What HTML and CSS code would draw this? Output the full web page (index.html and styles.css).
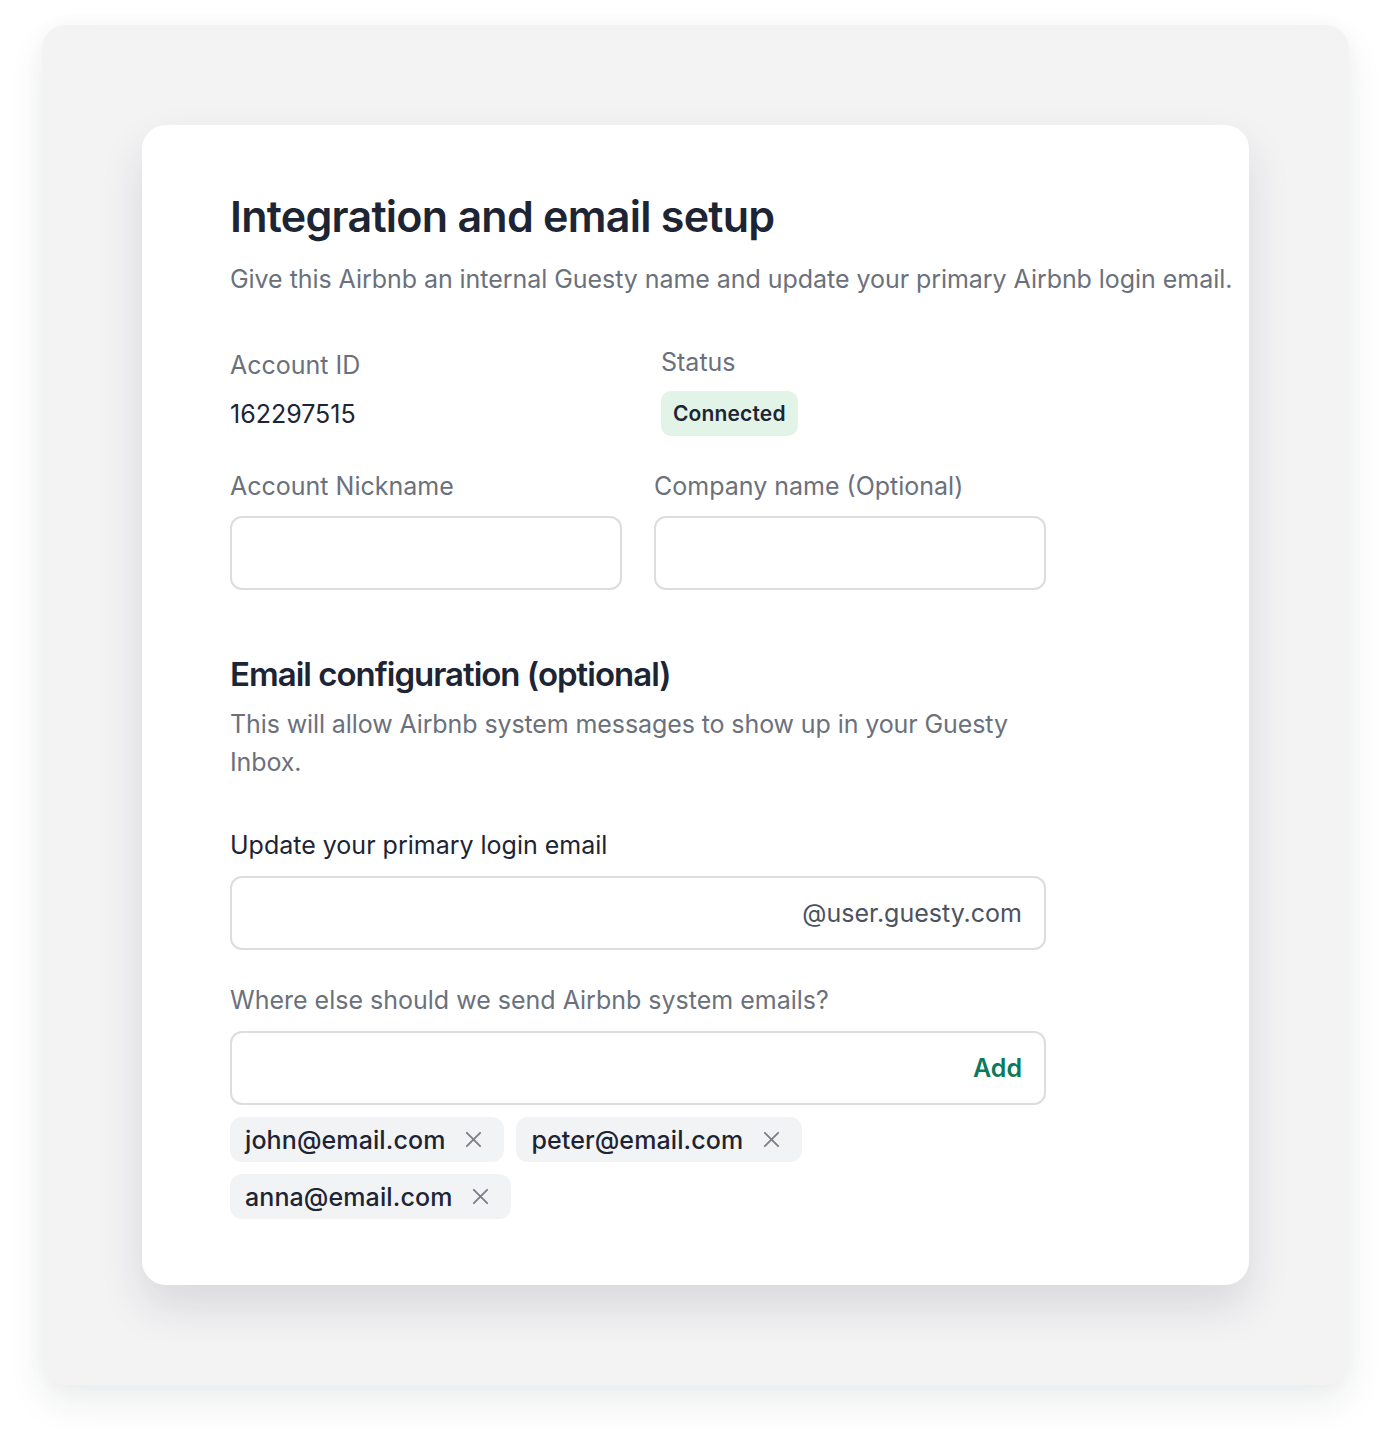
FILE: index.html
```html
<!DOCTYPE html>
<html lang="en">
<head>
<meta charset="utf-8">
<title>Integration and email setup</title>
<link rel="stylesheet" href="styles.css">
</head>
<body>
<div class="panel">
  <div class="card">
    <h1 class="title">Integration and email setup</h1>
    <p class="subtitle">Give this Airbnb an internal Guesty name and update your primary Airbnb login email.</p>

    <div class="info-row">
      <div class="info-col">
        <div class="label">Account ID</div>
        <div class="value">162297515</div>
      </div>
      <div class="info-col status-col">
        <div class="label">Status</div>
        <span class="badge">Connected</span>
      </div>
    </div>

    <div class="field-row">
      <div class="field">
        <label class="label">Account Nickname</label>
        <div class="input"></div>
      </div>
      <div class="field">
        <label class="label">Company name (Optional)</label>
        <div class="input"></div>
      </div>
    </div>

    <h2 class="section-title">Email configuration (optional)</h2>
    <p class="section-desc">This will allow Airbnb system messages to show up in your Guesty Inbox.</p>

    <div class="field wide first">
      <label class="label dark">Update your primary login email</label>
      <div class="input with-suffix"><span class="suffix">@user.guesty.com</span></div>
    </div>

    <div class="field wide second">
      <label class="label">Where else should we send Airbnb system emails?</label>
      <div class="input with-suffix"><span class="add">Add</span></div>
    </div>

    <div class="chips">
      <span class="chip">john@email.com<svg class="x" viewBox="0 0 20 20"><path d="M3 3L17 17M17 3L3 17"/></svg></span>
      <span class="chip">peter@email.com<svg class="x" viewBox="0 0 20 20"><path d="M3 3L17 17M17 3L3 17"/></svg></span>
      <span class="chip">anna@email.com<svg class="x" viewBox="0 0 20 20"><path d="M3 3L17 17M17 3L3 17"/></svg></span>
    </div>
  </div>
</div>
</body>
</html>
```
FILE: styles.css
```css
* { box-sizing: border-box; }

html, body {
  margin: 0;
  padding: 0;
  background: #ffffff;
}

body {
  font-family: "Inter", "Liberation Sans", sans-serif;
  color: #1d2433;
  padding: 25px 42px 59px;
}

.panel {
  background: #f3f3f4;
  border-radius: 24px;
  padding: 100px;
  box-shadow: 0 18px 36px rgba(30, 35, 55, 0.08), 0 0 20px rgba(30, 35, 55, 0.03);
}

.card {
  background: #ffffff;
  border-radius: 24px;
  padding: 65px 0 67px 88px;
  height: 1160px;
  box-shadow: 0 22px 44px rgba(30, 35, 60, 0.12);
}

.title {
  margin: 0;
  font-size: 43px;
  line-height: 52px;
  font-weight: 600;
  letter-spacing: -0.75px;
  color: #1d2433;
}

.subtitle {
  margin: 19px 0 0;
  font-size: 25px;
  line-height: 36px;
  color: #6b717c;
  white-space: nowrap;
  letter-spacing: -0.05px;
}

.label {
  display: block;
  font-size: 25px;
  line-height: 36px;
  color: #6b717c;
}

.label.dark {
  color: #1d2433;
}

.info-row {
  display: grid;
  grid-template-columns: 431px auto;
  margin-top: 50px;
}

.info-col {
  display: flex;
  flex-direction: column;
  align-items: flex-start;
}

.status-col {
  margin-top: -3px;
}

.value {
  margin-top: 13px;
  font-size: 25px;
  line-height: 36px;
  color: #1d2433;
}

.badge {
  margin-top: 11px;
  height: 45px;
  padding: 0 12px;
  display: inline-flex;
  align-items: center;
  background: #e2f4e8;
  border-radius: 10px;
  font-size: 21px;
  font-weight: 600;
  color: #1d2433;
  letter-spacing: 0.15px;
}

.field-row {
  display: grid;
  grid-template-columns: 392px 392px;
  column-gap: 32px;
  margin-top: 32px;
}

.field {
  display: flex;
  flex-direction: column;
}

.input {
  margin-top: 12px;
  height: 74px;
  border: 2px solid #dcdde1;
  border-radius: 12px;
  background: #ffffff;
}

.section-title {
  margin: 62px 0 0;
  font-size: 33px;
  line-height: 44px;
  font-weight: 600;
  letter-spacing: -1px;
  color: #1d2433;
}

.section-desc {
  margin: 9px 0 0;
  width: 816px;
  font-size: 25px;
  line-height: 38px;
  color: #6b717c;
  letter-spacing: -0.1px;
}

.field.wide {
  width: 816px;
}

.field.first {
  margin-top: 46px;
}

.field.second {
  margin-top: 32px;
}

.field.wide .input {
  margin-top: 13px;
  height: 74px;
}

.with-suffix {
  display: flex;
  align-items: center;
  justify-content: flex-end;
  padding: 0 22px;
}

.suffix {
  font-size: 25px;
  color: #4b5260;
}

.add {
  font-size: 25px;
  font-weight: 600;
  color: #0b7a5c;
}

.chips {
  display: flex;
  flex-wrap: wrap;
  gap: 12px;
  width: 620px;
  margin-top: 12px;
}

.chip {
  display: inline-flex;
  align-items: center;
  height: 45px;
  padding: 0 21px 0 15px;
  background: #f2f3f5;
  border-radius: 12px;
  font-size: 25px;
  font-weight: 500;
  color: #1d2433;
  letter-spacing: 0.1px;
}

.x {
  width: 19px;
  height: 19px;
  margin-left: 19px;
  fill: none;
  stroke: #7b808a;
  stroke-width: 2;
  stroke-linecap: round;
}
```
